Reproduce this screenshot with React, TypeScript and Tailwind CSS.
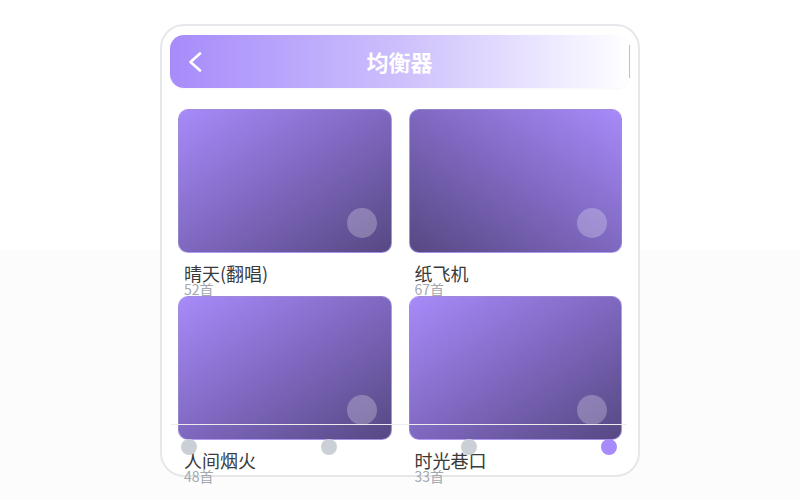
type Album = { name: string; count: number; dir: 'br' | 'bl' }

const ALBUMS: Album[] = [
  { name: '晴天(翻唱)', count: 52, dir: 'br' },
  { name: '纸飞机', count: 67, dir: 'bl' },
  { name: '人间烟火', count: 48, dir: 'br' },
  { name: '时光巷口', count: 33, dir: 'br' },
]

function AlbumCard({ album }: { album: Album }) {
  return (
    <div className="flex flex-col">
      <div
        className={`relative h-[144px] rounded-[10px] border border-[#b9a6f5]/60 ${
          album.dir === 'br'
            ? 'bg-gradient-to-br from-[#a78bfa] via-[#7f68c0] to-[#574883]'
            : 'bg-gradient-to-bl from-[#a78bfa] via-[#7f68c0] to-[#574883]'
        }`}
      >
        <div className="absolute right-[14px] bottom-[14px] h-[30px] w-[30px] rounded-full bg-white/25" />
      </div>
      <div className="mt-[11px] pl-[6px] text-[18px] leading-[18px] text-[#3a3a3a]">{album.name}</div>
      <div className="pl-[6px] text-[14px] leading-[14px] text-[#a3a8b0]">{album.count}首</div>
    </div>
  )
}

export default function App() {
  return (
    <div
      className="h-[500px] w-full overflow-hidden bg-[linear-gradient(#ffffff_250px,#fcfcfd_250px)] pt-6"
      style={{ fontFamily: '"Noto Sans CJK SC", "Noto Sans", sans-serif' }}
    >
      <div className="relative mx-auto h-[453px] w-[480px] rounded-[24px] border-2 border-[#e6e7eb] bg-white">
        <div className="mx-2 mt-[9px] flex h-[53px] items-center rounded-[14px] bg-gradient-to-r from-[#a78bfa] via-[#cdbffc] to-white pl-[18px] shadow-[0_1px_3px_rgba(0,0,0,0.04)]">
          <svg width="14" height="20" viewBox="0 0 14 20" fill="none" className="shrink-0">
            <polyline
              points="12,1.5 2.5,10 12,18.5"
              stroke="white"
              strokeWidth="2.6"
              strokeLinecap="round"
              strokeLinejoin="round"
            />
          </svg>
          <div className="flex-1 pr-[32px] text-center text-[22px] font-bold text-white">均衡器</div>
          <div className="h-[33px] w-px bg-[#c4b5fd]" />
        </div>

        <div className="mx-4 mt-[21px] grid grid-cols-2 gap-x-[17px]">
          {ALBUMS.map((a) => (
            <AlbumCard key={a.name} album={a} />
          ))}
        </div>

        <div className="absolute left-[9px] top-[398px] w-[456px]">
          <div className="h-px bg-[#ececef]" />
          <div className="mt-[14px] flex justify-between px-[10px]">
            <span className="h-4 w-4 rounded-full bg-[#cbd0d6]" />
            <span className="h-4 w-4 rounded-full bg-[#cbd0d6]" />
            <span className="h-4 w-4 rounded-full bg-[#cbd0d6]" />
            <span className="h-4 w-4 rounded-full bg-[#a78bfa]" />
          </div>
        </div>
      </div>
    </div>
  )
}
